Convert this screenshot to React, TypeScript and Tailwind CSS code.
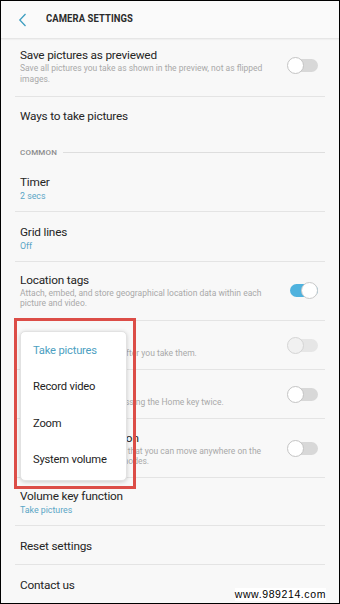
const font = "[font-family:Roboto,'Noto_Sans',sans-serif]"

function Toggle({ on = false, disabled = false }: { on?: boolean; disabled?: boolean }) {
  return (
    <div className="relative h-[17px] w-[31px] shrink-0">
      <div
        className={
          "absolute left-[3px] right-0 top-[2px] h-[13px] rounded-full " +
          (on ? "bg-[#4fb2de]" : disabled ? "bg-[#e6e6e6]" : "bg-[#d8d8d8]")
        }
      />
      <div
        className={
          "absolute top-0 h-[17px] w-[17px] rounded-full border " +
          (on ? "right-0 border-[#c9c9c9] bg-white" : disabled ? "left-0 border-[#d4d4d4] bg-[#f1f1f1]" : "left-0 border-[#c4c4c4] bg-white")
        }
      />
    </div>
  )
}

function Divider() {
  return <div className="mx-[14px] h-px bg-[#e4e4e4]" />
}

type RowProps = {
  title: string
  value?: string
  desc?: string
  toggle?: "on" | "off" | "disabled"
  h: string
}

function Row({ title, value, desc, toggle, h }: RowProps) {
  return (
    <div className={"flex items-center pl-[19px] pr-[21px] " + h}>
      <div className="flex min-w-0 flex-1 flex-col">
        <p className="text-[11.8px] leading-[16px] tracking-[-0.2px] text-[#252525]">{title}</p>
        {value && <p className="text-[8.8px] leading-[12px] text-[#5aa6c6]">{value}</p>}
        {desc && <p className="pr-[10px] text-[8.5px] leading-[10.5px] text-[#a9a9a9]">{desc}</p>}
      </div>
      {toggle && <Toggle on={toggle === "on"} disabled={toggle === "disabled"} />}
    </div>
  )
}

const menuItems = ["Take pictures", "Record video", "Zoom", "System volume"]

export default function App() {
  return (
    <div className={"relative h-[604px] w-[340px] overflow-hidden border border-black bg-[#f8f8f8] " + font}>
      <header className="flex h-[38px] items-center border-b border-[#e6e6e6] bg-[#fafafa] shadow-[0_1px_1px_rgba(0,0,0,0.03)]">
        <svg className="ml-[17px] h-[14px] w-[9px]" viewBox="0 0 9 14" fill="none">
          <path d="M7.5 1 L1.8 7 L7.5 13" stroke="#3e9ec0" strokeWidth="1.3" />
        </svg>
        <h1 className="ml-[19px] origin-left scale-x-[0.86] text-[11px] font-bold tracking-[0.1px] text-[#2b2b2b]">CAMERA SETTINGS</h1>
      </header>

      <Row
        h="h-[57px] pb-[4px]"
        title="Save pictures as previewed"
        desc="Save all pictures you take as shown in the preview, not as flipped images."
        toggle="off"
      />
      <Divider />
      <Row h="h-[37px]" title="Ways to take pictures" />

      <div className="flex h-[29px] items-end gap-[6px] pb-[5px] pl-[19px] pr-[14px]">
        <span className="text-[8px] font-medium leading-[10px] tracking-[0.2px] text-[#8c8c8c]">COMMON</span>
        <div className="mb-[5px] h-px flex-1 bg-[#dedede]" />
      </div>

      <Row h="h-[48px] pt-[1px]" title="Timer" value="2 secs" />
      <Divider />
      <Row h="h-[49px] pt-[2px]" title="Grid lines" value="Off" />
      <Divider />
      <Row
        h="h-[58px] pb-[2px]"
        title="Location tags"
        desc="Attach, embed, and store geographical location data within each picture and video."
        toggle="on"
      />
      <Divider />
      <Row h="h-[48px]" title="Review pictures" desc="View pictures immediately after you take them." toggle="disabled" />
      <Divider />
      <Row h="h-[48px]" title="Quick launch" desc="Open Camera quickly by pressing the Home key twice." toggle="off" />
      <Divider />
      <Row
        h="h-[58px]"
        title="Floating Camera button"
        desc="Add an extra Camera button that you can move anywhere on the screen in Photo and Video modes."
        toggle="off"
      />
      <Divider />
      <Row h="h-[47px] pt-[1px]" title="Volume key function" value="Take pictures" />
      <Divider />
      <Row h="h-[38px] pt-[2px]" title="Reset settings" />
      <Divider />
      <Row h="h-[38px] pt-[2px]" title="Contact us" />

      <div className="absolute left-[19px] top-[330px] w-[107px] rounded-[5px] border border-[#e2e2e2] bg-white py-px shadow-[0_1px_4px_rgba(0,0,0,0.18)]">
        {menuItems.map((item, i) => (
          <div
            key={item}
            className={
              "flex h-[36.5px] items-center pl-[12px] text-[11.2px] tracking-[-0.2px] " +
              (i === 0 ? "text-[#4d9fc2]" : "text-[#232323]")
            }
          >
            {item}
          </div>
        ))}
      </div>

      <div className="pointer-events-none absolute left-[13px] top-[317px] h-[171px] w-[122px] border-[3px] border-[#dc4d47]" />

      <span className="absolute bottom-[2px] right-[13px] bg-white [font-family:'Liberation_Sans',Arial,sans-serif] text-[10.5px] leading-[13px] tracking-[0.6px] text-black">
        www.989214.com
      </span>
    </div>
  )
}
